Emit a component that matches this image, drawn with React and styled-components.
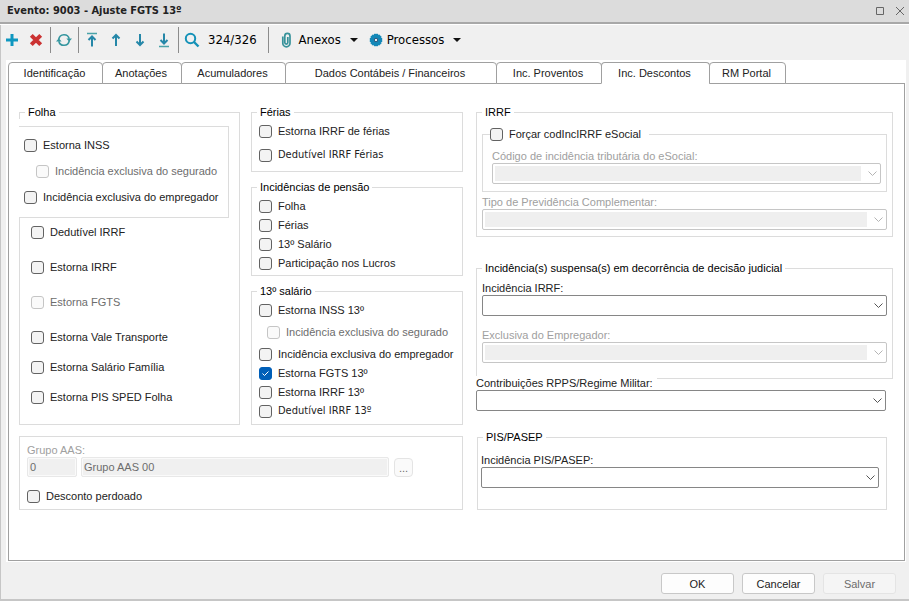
import React, { useId, useState } from 'react';
import styled, { createGlobalStyle } from 'styled-components';

const TABS = [
  { label: 'Identificação', width: 95 },
  { label: 'Anotações', width: 80 },
  { label: 'Acumuladores', width: 105 },
  { label: 'Dados Contábeis / Financeiros', width: 212 },
  { label: 'Inc. Proventos', width: 106 },
  { label: 'Inc. Descontos', width: 109 },
  { label: 'RM Portal', width: 77 },
];

const ArrowIcon = ({ down, bar }) => (
  <svg width="16" height="16" viewBox="0 0 16 16" fill="none" stroke="#2587a8" strokeWidth="2">
    <g transform={down ? 'rotate(180 8 8)' : undefined}>
      {bar && <path d="M3 1.5H13" stroke="#4aa3a8" strokeWidth="1.5" />}
      <path d={bar ? 'M8 14.5V5' : 'M8 14V3'} />
      <path d={bar ? 'M4.5 8L8 4.5L11.5 8' : 'M4.5 6.5L8 3L11.5 6.5'} />
    </g>
  </svg>
);

const CheckBox = ({ label, indent, disabled, defaultChecked, tahoma }) => {
  const id = useId();
  return (
    <CheckRow $indent={indent} $disabled={disabled} $tahoma={tahoma}>
      <span className="box">
        <input id={id} type="checkbox" disabled={disabled} defaultChecked={defaultChecked} />
        <svg width="13" height="13" viewBox="0 0 13 13" fill="none" stroke="#fff">
          <path d="M3.5 6.5L5.5 8.5L9.5 4.5" />
        </svg>
      </span>
      <label htmlFor={id}>{label}</label>
    </CheckRow>
  );
};

const SelectField = ({ label, disabled }) => {
  const id = useId();
  return (
    <Field>
      <FieldLabel htmlFor={id} $disabled={disabled}>{label}</FieldLabel>
      <SelectWrap $disabled={disabled}>
        <select id={id} disabled={disabled} />
        <svg width="9" height="5" viewBox="0 0 9 5" fill="none">
          <path d="M0.5 0.5L4.5 4.5L8.5 0.5" />
        </svg>
      </SelectWrap>
    </Field>
  );
};

const Toolbar = () => (
  <ToolbarRow>
    <IconButton aria-label="Novo">
      <svg width="16" height="16" viewBox="0 0 16 16" stroke="#0e97c0" strokeWidth="3">
        <path d="M8 2V14M2 8H14" />
      </svg>
    </IconButton>
    <IconButton aria-label="Excluir">
      <svg width="16" height="16" viewBox="0 0 16 16" stroke="#cb3232" strokeWidth="4">
        <path d="M3.3 3.3L12.7 12.7M12.7 3.3L3.3 12.7" />
      </svg>
    </IconButton>
    <Separator />
    <IconButton aria-label="Atualizar">
      <svg width="16" height="16" viewBox="0 0 16 16" fill="none" stroke="#35969f" strokeWidth="1.6">
        <path d="M2.8 7.2A5.3 5.3 0 0 1 13.2 6.8M13.2 8.8A5.3 5.3 0 0 1 2.8 9.2" />
        <path d="M10.4 6.6H16L13.2 9.8ZM5.6 9.4H0L2.8 6.2Z" fill="#35969f" stroke="none" />
      </svg>
    </IconButton>
    <Separator />
    <IconButton aria-label="Primeiro"><ArrowIcon bar /></IconButton>
    <IconButton aria-label="Anterior"><ArrowIcon /></IconButton>
    <IconButton aria-label="Próximo"><ArrowIcon down /></IconButton>
    <IconButton aria-label="Último"><ArrowIcon down bar /></IconButton>
    <Separator />
    <IconButton aria-label="Pesquisar">
      <svg width="16" height="16" viewBox="0 0 16 16" fill="none" stroke="#1592b8" strokeWidth="2">
        <circle cx="6.5" cy="6.5" r="4.7" />
        <path d="M10 10L14.5 14.5" strokeWidth="2.4" />
      </svg>
    </IconButton>
    <Counter>324/326</Counter>
    <Separator />
    <MenuButton>
      <svg width="16" height="16" viewBox="0 0 16 16" fill="none" stroke="#37929a" strokeWidth="1.7">
        <path d="M3.8 4.5V11.2A3.6 3.6 0 0 0 11 11.2V4A2.6 2.6 0 0 0 5.8 4V10.6A1.5 1.5 0 0 0 8.8 10.6V5" />
      </svg>
      Anexos
      <i />
    </MenuButton>
    <MenuButton>
      <svg width="14" height="14" viewBox="0 0 14 14">
        <g fill="#1488b8">
          <circle cx="7" cy="7" r="5.2" />
          <path d="M5 0.8H9V13.2H5Z" />
          <path d="M0.8 5H13.2V9H0.8Z" />
          <path d="M5 0.8H9V13.2H5Z" transform="rotate(45 7 7)" />
          <path d="M5 0.8H9V13.2H5Z" transform="rotate(135 7 7)" />
        </g>
        <path d="M5.5 5.5H8.5V8.5H5.5Z" fill="#e6eef2" stroke="#2d5f86" />
      </svg>
      Processos
      <i />
    </MenuButton>
  </ToolbarRow>
);

const App = () => {
  const [active, setActive] = useState('Inc. Descontos');
  return (
    <Window>
      <GlobalStyle />
      <TitleBar>
        <h1>Evento: 9003 - Ajuste FGTS 13º</h1>
        <button aria-label="Maximizar">
          <svg width="10" height="10" viewBox="0 0 10 10"><path d="M1.5 1.5H8.5V8.5H1.5Z" /></svg>
        </button>
        <button aria-label="Fechar">
          <svg width="10" height="10" viewBox="0 0 10 10"><path d="M1 1L9 9M9 1L1 9" /></svg>
        </button>
      </TitleBar>
      <Toolbar />
      <Pages>
        <TabList role="tablist">
          {TABS.map(({ label, width }) => (
            <Tab
              key={label}
              role="tab"
              aria-selected={label === active}
              $width={width}
              $active={label === active}
              onClick={() => setActive(label)}
            >
              {label}
            </Tab>
          ))}
        </TabList>
        <Panel role="tabpanel">
          <Column $gap={11}>
            <Halves>
              <Group>
                <legend>Folha</legend>
                <OpenBox>
                  <Column $gap={12}>
                    <CheckBox label="Estorna INSS" />
                    <CheckBox label="Incidência exclusiva do segurado" indent={12} disabled />
                    <CheckBox label="Incidência exclusiva do empregador" />
                  </Column>
                </OpenBox>
                <FolhaList>
                  <Column $gap={21}>
                    <CheckBox label="Dedutível IRRF" />
                    <CheckBox label="Estorna IRRF" />
                    <CheckBox label="Estorna FGTS" disabled />
                    <CheckBox label="Estorna Vale Transporte" />
                  </Column>
                  <CheckBox label="Estorna Salário Família" />
                  <CheckBox label="Estorna PIS SPED Folha" />
                </FolhaList>
              </Group>
              <Column $gap={8}>
                <Group $pad="5px 7px 9px">
                  <legend>Férias</legend>
                  <Column $gap={10}>
                    <CheckBox label="Estorna IRRF de férias" />
                    <CheckBox label="Dedutível IRRF Férias" tahoma />
                  </Column>
                </Group>
                <Group $pad="5px 7px 5px">
                  <legend>Incidências de pensão</legend>
                  <Column $gap={5}>
                    <CheckBox label="Folha" />
                    <CheckBox label="Férias" />
                    <CheckBox label="13º Salário" />
                    <CheckBox label="Participação nos Lucros" />
                  </Column>
                </Group>
                <Group $pad="5px 7px 6px">
                  <legend>13º salário</legend>
                  <Column $gap={5}>
                    <Column $gap={8}>
                      <CheckBox label="Estorna INSS 13º" />
                      <CheckBox label="Incidência exclusiva do segurado" indent={8} disabled />
                      <CheckBox label="Incidência exclusiva do empregador" />
                    </Column>
                    <CheckBox label="Estorna FGTS 13º" defaultChecked />
                    <CheckBox label="Estorna IRRF 13º" />
                    <CheckBox label="Dedutível IRRF 13º" tahoma />
                  </Column>
                </Group>
              </Column>
            </Halves>
            <AasBox>
              <FieldLabel htmlFor="grupo" $disabled>Grupo AAS:</FieldLabel>
              <AasRow>
                <TextBox id="grupo" $width="50px" defaultValue="0" disabled />
                <TextBox aria-label="Descrição do grupo" $width="308px" defaultValue="Grupo AAS 00" disabled />
                <MoreButton disabled>...</MoreButton>
              </AasRow>
              <CheckBox label="Desconto perdoado" />
            </AasBox>
          </Column>
          <Column $gap={0}>
            <Group $pad="8px 5px 6px">
              <legend>IRRF</legend>
              <Column $gap={3}>
                <Group $pad="8px 5px 7px 9px">
                  <legend className="check"><CheckBox label="Forçar codIncIRRF eSocial" /></legend>
                  <SelectField label="Código de incidência tributária do eSocial:" disabled />
                </Group>
                <SelectField label="Tipo de Previdência Complementar:" disabled />
              </Column>
            </Group>
            <Judicial $pad="6px 5px 15px">
              <legend>Incidência(s) suspensa(s) em decorrência de decisão judicial</legend>
              <Column $gap={12}>
                <SelectField label="Incidência IRRF:" />
                <SelectField label="Exclusiva do Empregador:" disabled />
              </Column>
            </Judicial>
            <Rpps><SelectField label="Contribuições RPPS/Regime Militar:" /></Rpps>
            <PisPasep $pad="9px 7px 21px 3px">
              <legend>PIS/PASEP</legend>
              <SelectField label="Incidência PIS/PASEP:" />
            </PisPasep>
          </Column>
        </Panel>
      </Pages>
      <Footer>
        <PushButton>OK</PushButton>
        <PushButton>Cancelar</PushButton>
        <PushButton disabled>Salvar</PushButton>
      </Footer>
    </Window>
  );
};

const GlobalStyle = createGlobalStyle`
  * {
    box-sizing: border-box;
  }
  body {
    margin: 0;
    font: 11px/14px 'Liberation Sans', Arial, sans-serif;
    color: #222;
    background: #f0f0f0;
  }
  button, input, select {
    font: inherit;
    color: inherit;
    margin: 0;
  }
  svg {
    display: block;
    flex: none;
  }
`;

const Window = styled.main`
  display: flex;
  flex-direction: column;
  min-height: 100vh;
  background: #f0f0f0;
  box-shadow: inset 1px -2px 0 #c6c6c6;
`;

const TitleBar = styled.header`
  display: flex;
  align-items: center;
  gap: 10px;
  height: 25px;
  padding: 0 4px 2px 7px;
  background: #dcdcdc;
  border-bottom: 1px solid #fff;
  box-shadow: inset 0 -2px 0 #a8a8a8;
  h1 {
    flex: 1;
    margin: 0;
    font: bold 11px/14px 'DejaVu Sans Condensed', Tahoma, sans-serif;
  }
  button {
    padding: 0;
    border: 0;
    background: none;
  }
  path {
    fill: none;
    stroke: #666;
  }
`;

const ToolbarRow = styled.div`
  display: flex;
  align-items: center;
  height: 35px;
  padding-bottom: 5px;
  font: 13px/16px 'DejaVu Sans Condensed', Tahoma, sans-serif;
  color: #000;
`;

const IconButton = styled.button`
  display: flex;
  justify-content: center;
  width: 24px;
  padding: 0;
  border: 0;
  background: none;
`;

const Separator = styled.span`
  width: 1px;
  height: 26px;
  margin: 0 1px 0 2px;
  background: #8c8c8c;
`;

const Counter = styled.span`
  padding: 0 9px 0 4px;
`;

const MenuButton = styled.button`
  display: flex;
  align-items: center;
  gap: 4px;
  padding: 0 2px 0 9px;
  border: 0;
  background: none;
  i {
    margin-left: 5px;
    border: 4px solid transparent;
    border-top-color: #111;
    border-bottom: 0;
  }
`;

const Pages = styled.section`
  display: flex;
  flex-direction: column;
  flex: 1;
  margin: 0 3px 0 6px;
  padding: 2px 1px 1px 2px;
  background: #fff;
`;

const TabList = styled.div`
  display: flex;
`;

const Tab = styled.button`
  position: relative;
  width: ${({ $width }) => $width}px;
  height: 22px;
  margin: 0 -1px -1px 0;
  padding: 0 2px 0 0;
  border: 1px solid #a0a0a0;
  border-bottom-color: ${({ $active }) => ($active ? '#fff' : '#a0a0a0')};
  border-radius: 4px 4px 0 0;
  background: #fff;
  white-space: nowrap;
`;

const Panel = styled.div`
  display: grid;
  grid-template-columns: minmax(0, 444fr) minmax(0, 417fr);
  gap: 13px;
  align-items: start;
  flex: 1;
  padding: 21px 11px 16px 10px;
  border: 1px solid #a0a0a0;
`;

const Column = styled.div`
  display: flex;
  flex-direction: column;
  gap: ${({ $gap }) => $gap}px;
`;

const Halves = styled.div`
  display: grid;
  grid-template-columns: minmax(0, 221fr) minmax(0, 212fr);
  gap: 11px;
`;

const Group = styled.fieldset`
  min-width: 0;
  margin: 0;
  padding: ${({ $pad }) => $pad || 0};
  border: 1px solid #dcdcdc;
  > legend {
    /* keeps captions aligned whatever padding the group has */
    margin-left: ${({ $pad }) => ($pad ? 5 - parseInt($pad.split(' ')[3] || $pad.split(' ')[1], 10) : 5)}px;
    padding: 0 3px;
    color: #000;
    &.check {
      margin-left: -2px;
      padding: 0 8px 0 0;
    }
  }
`;

const Judicial = styled(Group)`
  margin-top: 24px;
`;

const PisPasep = styled(Group)`
  margin: 19px 6px 0 1px;
`;

const Rpps = styled.div`
  position: relative;
  margin: -3px 7px 0 0;
`;

const OpenBox = styled.div`
  margin: 0 10px 0 -1px;
  padding-top: 7px;
  background: #fff;
  > div {
    padding: 11px 5px 13px;
    border: 1px solid #dcdcdc;
    border-left: 0;
  }
`;

const FolhaList = styled.div`
  display: flex;
  flex-direction: column;
  gap: 16px;
  padding: 7px 11px 20px;
`;

const CheckRow = styled.div`
  display: flex;
  align-items: center;
  gap: 6px;
  height: 14px;
  margin-left: ${({ $indent }) => $indent || 0}px;
  color: ${({ $disabled }) => ($disabled ? '#6d6d6d' : '#222')};
  white-space: nowrap;
  ${({ $tahoma }) => $tahoma && "font-family: 'DejaVu Sans Condensed', Tahoma, sans-serif;"}
  .box {
    display: grid;
    > * {
      grid-area: 1 / 1;
    }
  }
  svg {
    pointer-events: none;
  }
  input {
    appearance: none;
    width: 13px;
    height: 13px;
    border: 1px solid #626262;
    border-radius: 3px;
    background: #f3f3f3;
    &:disabled {
      border-color: #c5c5c5;
      background: #fafafa;
    }
    &:checked {
      border-color: #005fb8;
      background: #005fb8;
    }
    &:not(:checked) + svg {
      visibility: hidden;
    }
  }
`;

const Field = styled.div`
  display: flex;
  flex-direction: column;
  align-items: flex-start;
`;

const FieldLabel = styled.label`
  padding-right: 4px;
  background: #fff;
  color: ${({ $disabled }) => ($disabled ? '#a0a0a0' : '#222')};
`;

const SelectWrap = styled.div`
  position: relative;
  width: 100%;
  select {
    display: block;
    appearance: none;
    width: 100%;
    height: 21px;
    padding: 0 20px 0 3px;
    border: 1px solid #868686;
    border-radius: 2px;
    background: #fff;
    &:disabled {
      border-color: #c6c6c6;
      background: linear-gradient(#efefef, #efefef) 2px 2px / calc(100% - 21px) calc(100% - 4px) no-repeat #fff;
      opacity: 1;
    }
  }
  svg {
    position: absolute;
    right: 4px;
    top: 8px;
    stroke: ${({ $disabled }) => ($disabled ? '#b4b4b4' : '#555')};
    pointer-events: none;
  }
`;

const AasBox = styled.div`
  padding: 6px 7px;
  border: 1px solid #dcdcdc;
`;

const AasRow = styled.div`
  display: flex;
  align-items: flex-end;
  gap: 4px;
  margin-bottom: 12px;
`;

const TextBox = styled.input`
  flex: 0 1 ${({ $width }) => $width};
  min-width: 0;
  height: 20px;
  padding: 0 2px;
  border: 1px solid #e8e8e8;
  border-radius: 2px;
  background: #f0f0f0;
  box-shadow: inset 0 0 0 1px #fafafa;
  color: #6d6d6d;
`;

const MoreButton = styled.button`
  width: 19px;
  height: 19px;
  margin-left: 1px;
  padding: 0;
  border: 1px solid #e4e4e4;
  border-radius: 4px;
  background: #fafafa;
  color: #6d6d6d;
`;

const Footer = styled.footer`
  display: flex;
  justify-content: flex-end;
  gap: 8px;
  padding: 11px 13px 7px;
`;

const PushButton = styled.button`
  width: 73px;
  height: 21px;
  padding: 0;
  border: 1px solid #c8c8c8;
  border-radius: 3px;
  background: #fdfdfd;
  &:disabled {
    border-color: #e4e4e4;
    background: #f5f5f5;
    color: #6d6d6d;
  }
`;

export default App;
